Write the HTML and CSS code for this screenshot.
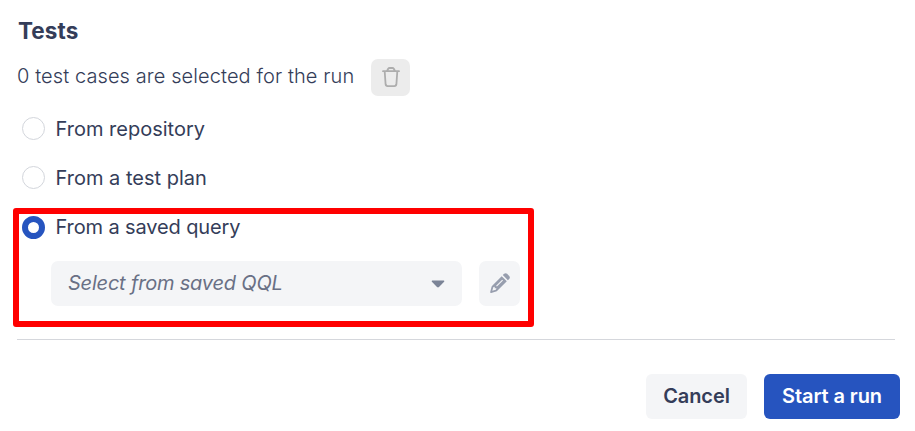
FILE: index.html
```html
<!DOCTYPE html>
<html lang="en">
<head>
<meta charset="utf-8">
<title>Tests</title>
<link rel="stylesheet" href="styles.css">
</head>
<body>
<main class="panel">
  <h2 class="title">Tests</h2>
  <div class="summary">
    <span class="count">0 test cases are selected for the run</span>
    <button class="trash" aria-label="Clear">
      <svg width="18" height="20" viewBox="0 0 18 20" fill="none" stroke="#adadad" stroke-width="1.8" stroke-linecap="round" stroke-linejoin="round"><path d="M1 4.200h16M5 4l1.200-2.200q.5-.8 1.400-.8h2.800q.9 0 1.400.8L13 4M2.700 4.500l.9 12.700q.2 1.900 2 1.900h6.800q1.800 0 2-1.900l.9-12.700"/></svg>
    </button>
  </div>
  <div class="options">
    <label class="option"><span class="radio"></span><span>From repository</span></label>
    <label class="option"><span class="radio"></span><span>From a test plan</span></label>
  </div>
  <section class="highlight">
    <label class="option"><span class="radio checked"></span><span class="saved">From a saved query</span></label>
    <div class="query">
      <div class="select"><span class="placeholder">Select from saved QQL</span>
        <svg width="14" height="8" viewBox="0 0 14 8"><path d="M1.200.5h11.600q1 .3.3 1.200L8 7.100q-1 .8-2 0L.9 1.700Q.3.8 1.200.5z" fill="#7b8497"/></svg>
      </div>
      <button class="edit" aria-label="Edit">
        <svg width="20" height="20" viewBox="0 0 20 20" fill="#979eae"><path fill-rule="evenodd" d="M11.700 3.200l5.100 5.100L7.300 17.800q-.5.500-1.200.7L1.200 19.900Q0 20.100.2 18.900L1.500 13.900q.2-.7.7-1.200zM3.300 14.300l-1 3.500 3.500-1 .7-1.500H4.700v-1.500zM12.200 6.700l-6.100 6.100.8.8L13 7.500z"/><path d="M12.800 2.100l1.300-1.300q1.500-1.300 3 0l2.100 2.100q1.300 1.500 0 3l-1.300 1.300z"/></svg>
      </button>
    </div>
  </section>
  <footer class="actions">
    <button class="btn cancel">Cancel</button>
    <button class="btn primary">Start a run</button>
  </footer>
</main>
</body>
</html>
```
FILE: styles.css
```css
* { box-sizing: border-box; }
body { margin: 0; background: #fff; color: #343d59; font-family: Inter, sans-serif; font-size: 20px; line-height: 24px; }
button { border: 0; padding: 0; margin: 0; font: inherit; display: flex; align-items: center; justify-content: center; }
svg { display: block; }
.panel { width: 915px; height: 431px; padding-top: 18px; }
.title { margin: 0 0 0 18px; font-size: 22.5px; line-height: 26px; font-weight: 700; letter-spacing: .1px; }
.summary { display: flex; align-items: center; height: 37px; margin: 15px 0 0 17px; }
.count { width: 354px; padding-bottom: 3px; font-weight: 350; letter-spacing: .095px; white-space: nowrap; }
.trash { width: 39px; height: 37px; padding-bottom: 1px; border-radius: 7px; background: #ececec; }
.options { display: grid; gap: 25px; margin: 21px 0 0 22px; }
.option { display: flex; align-items: center; gap: 10.5px; height: 24px; }
.radio { width: 23px; height: 23px; margin-bottom: 1px; border: 1px solid #d3d6dc; border-radius: 50%; }
.radio.checked { margin: 1px 0 0; border: 6px solid #2654bf; }
.saved { letter-spacing: -.12px; }
.highlight { width: 521px; height: 119px; margin: 18px 0 0 13px; padding: 1px 0 0 3px; border: 6px solid #f00; border-radius: 3px; }
.query { display: flex; gap: 17px; margin: 22px 0 0 29px; }
.select { width: 411px; height: 45px; padding: 0 17px; display: flex; align-items: center; justify-content: space-between; background: #f4f5f7; border-radius: 7px; color: #697085; font-style: italic; }
.placeholder { padding-bottom: 2px; letter-spacing: -.2px; }
.edit { width: 41px; height: 45px; padding-bottom: 2px; background: #f4f5f7; border-radius: 7px; }
.actions { width: 883px; margin: 12px 0 0 17px; padding-top: 35px; display: flex; justify-content: flex-end; gap: 17px; background: linear-gradient(#d5d7dc, #d5d7dc) 0 0 / 878px 1px no-repeat; }
.btn { height: 45px; padding-bottom: 1px; border-radius: 6px; font-weight: 600; letter-spacing: -.1px; }
.cancel { width: 101px; background: #f4f5f7; color: #343d59; }
.primary { width: 136px; background: #2654bf; color: #fff; }
```
